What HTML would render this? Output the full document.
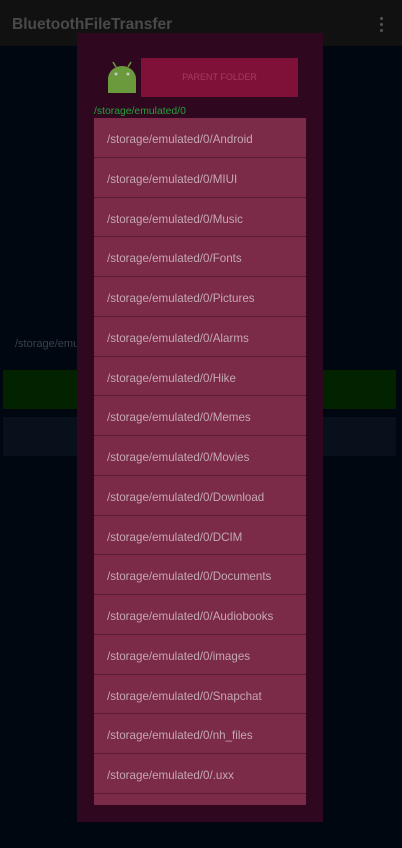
<!DOCTYPE html>
<html><head><meta charset="utf-8"><style>
*{margin:0;padding:0;box-sizing:border-box}
body{width:402px;height:848px;background:#010711;position:relative;overflow:hidden;font-family:"Liberation Sans",sans-serif}
.bar{position:absolute;left:0;top:0;width:402px;height:46px;background:#111111}
.title{position:absolute;left:12px;top:16px;font-size:15.5px;font-weight:bold;color:#4a4a4a}
.dots{position:absolute;left:380px;top:17px;width:4px}
.dots i{display:block;width:3px;height:3px;background:#555;border-radius:50%;margin-bottom:3px}
.bgtxt{position:absolute;left:15px;top:338px;font-size:11px;color:#3a414c}
.green{position:absolute;left:3px;top:370px;width:393px;height:39px;background:#022200}
.grey{position:absolute;left:3px;top:417px;width:393px;height:39px;background:#07101b}
.dlg{position:absolute;left:77px;top:33px;width:246px;height:789px;background:#2f0820}
.btn{position:absolute;left:141px;top:58px;width:157px;height:39px;background:#7f1038;color:#a83a62;font-size:9px;text-align:center;line-height:39px}
.path{position:absolute;left:94px;top:106px;font-size:10.4px;color:#24a13a}
.list{position:absolute;left:94px;top:118px;width:212px;height:687px;background:#7b2a48}
.row{height:39.76px;border-bottom:1px solid #5a1c33;color:#c4a8b5;font-size:11.6px;line-height:39px;padding-left:13px;padding-top:2px}
</style></head><body>
<div class="bar"><div class="title">BluetoothFileTransfer</div><div class="dots"><i></i><i></i><i></i></div></div>
<div class="bgtxt">/storage/emul</div>
<div class="green"></div><div class="grey"></div>
<div class="dlg"></div>
<svg style="position:absolute;left:104px;top:59px" width="36" height="36" viewBox="0 0 36 36">
<line x1="9" y1="3" x2="12" y2="8" stroke="#6a9a3c" stroke-width="1.5"/>
<line x1="27" y1="3" x2="24" y2="8" stroke="#6a9a3c" stroke-width="1.5"/>
<path d="M4 20 A14 13 0 0 1 32 20 L32 34 L4 34 Z" fill="#6a9a3c"/>
<circle cx="12" cy="15" r="1.5" fill="#c8c8c8"/><circle cx="24" cy="15" r="1.5" fill="#c8c8c8"/>
</svg>
<div class="btn">PARENT FOLDER</div>
<div class="path">/storage/emulated/0</div>
<div class="list">
<div class="row">/storage/emulated/0/Android</div>
<div class="row">/storage/emulated/0/MIUI</div>
<div class="row">/storage/emulated/0/Music</div>
<div class="row">/storage/emulated/0/Fonts</div>
<div class="row">/storage/emulated/0/Pictures</div>
<div class="row">/storage/emulated/0/Alarms</div>
<div class="row">/storage/emulated/0/Hike</div>
<div class="row">/storage/emulated/0/Memes</div>
<div class="row">/storage/emulated/0/Movies</div>
<div class="row">/storage/emulated/0/Download</div>
<div class="row">/storage/emulated/0/DCIM</div>
<div class="row">/storage/emulated/0/Documents</div>
<div class="row">/storage/emulated/0/Audiobooks</div>
<div class="row">/storage/emulated/0/images</div>
<div class="row">/storage/emulated/0/Snapchat</div>
<div class="row">/storage/emulated/0/nh_files</div>
<div class="row">/storage/emulated/0/.uxx</div>
</div>
</body></html>
